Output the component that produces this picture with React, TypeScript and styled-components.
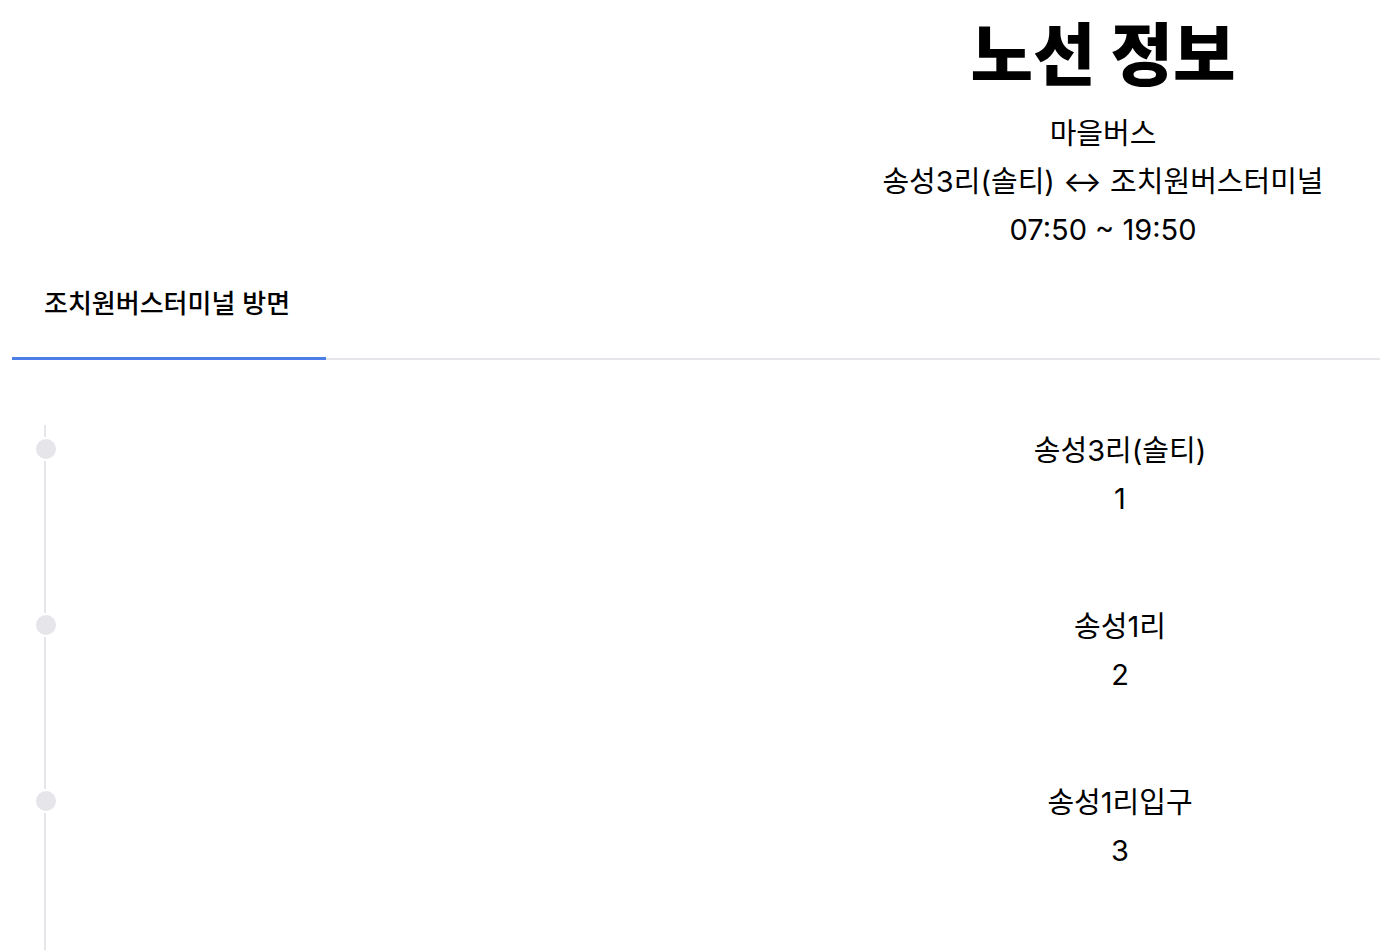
import React from 'react'
import styled, { createGlobalStyle } from 'styled-components'

type Stop = {
  name: string
  order: number
}

const stops: Stop[] = [
  { name: '송성3리(솔티)', order: 1 },
  { name: '송성1리', order: 2 },
  { name: '송성1리입구', order: 3 },
]

const GlobalStyle = createGlobalStyle`
  body {
    margin: 0;
    background: #fff;
    color: #000;
    font-family: Inter, 'Noto Sans CJK KR', sans-serif;
    overflow: hidden;
  }
`

/**
 * 노선 정보 페이지
 */
export default function App() {
  return (
    <>
      <GlobalStyle />
      <Header>
        <Title>노선 정보</Title>
        <InfoLine>마을버스</InfoLine>
        <InfoLine>송성3리(솔티) ↔ 조치원버스터미널</InfoLine>
        <InfoLine>07:50 ~ 19:50</InfoLine>
      </Header>
      <TabBar>
        <Tab isActive>조치원버스터미널 방면</Tab>
      </TabBar>
      <StopList>
        {stops.map((stop) => (
          <StopRow key={stop.order}>
            <Rail>
              <Dot />
            </Rail>
            <StopInfo>
              <StopName>{stop.name}</StopName>
              <StopOrder>{stop.order}</StopOrder>
            </StopInfo>
          </StopRow>
        ))}
      </StopList>
    </>
  )
}

const Header = styled.header`
  padding: 15px 0 0 826px;
  text-align: center;
`

const Title = styled.h1`
  margin: 0 0 15px;
  font-size: 68px;
  line-height: 80px;
  font-weight: 800;
`

const InfoLine = styled.p`
  margin: 0;
  font-size: 29px;
  line-height: 48px;
`

const TabBar = styled.nav`
  display: flex;
  margin-left: 12px;
  border-bottom: 2px solid #e5e5ea;
`

const Tab = styled.div<{ isActive?: boolean }>`
  box-sizing: border-box;
  width: 314px;
  height: 106px;
  padding: 0 0 8px 32px;
  margin-bottom: -2px;
  display: flex;
  align-items: center;
  font-size: 26px;
  font-weight: 500;
  border-bottom: 3px solid ${(props) => (props.isActive ? '#4c7ee8' : 'transparent')};
`

const StopList = styled.ol`
  list-style: none;
  margin: 0;
  padding: 65px 0 0;
`

const StopRow = styled.li`
  display: grid;
  grid-template-columns: 90px 1fr;
  height: 176px;
`

const Rail = styled.div`
  background: linear-gradient(#e5e5ea, #e5e5ea) no-repeat 44px 0 / 2px 100%;
`

const Dot = styled.div`
  width: 20px;
  height: 20px;
  margin: 12px 0 0 34px;
  border: 2px solid #fff;
  border-radius: 50%;
  background: #e5e5ea;
`

const StopInfo = styled.div`
  padding: 2px 0 0 770px;
  text-align: center;
`

const StopName = styled.p`
  margin: 0;
  font-size: 29px;
  line-height: 48px;
`

const StopOrder = styled.p`
  margin: 0;
  font-size: 29px;
  line-height: 48px;
`
